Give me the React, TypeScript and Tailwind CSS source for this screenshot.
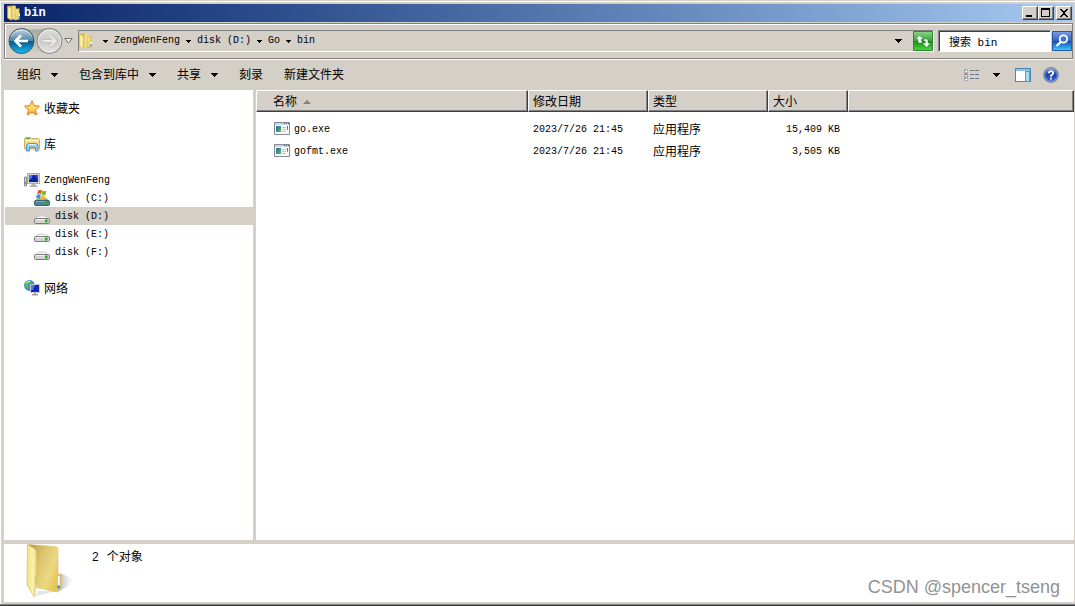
import React, { useState } from "react";

const crumbs = ["ZengWenFeng", "disk (D:)", "Go", "bin"];

const files = [
  { name: "go.exe", date: "2023/7/26 21:45", type: "应用程序", size: "15,409 KB" },
  { name: "gofmt.exe", date: "2023/7/26 21:45", type: "应用程序", size: "3,505 KB" },
];

const drives = ["disk (C:)", "disk (D:)", "disk (E:)", "disk (F:)"];

const MONO = "font-['Liberation_Mono','Noto_Sans_CJK_SC',monospace] text-[10px]";

function Arrow({ small = false }: { small?: boolean }) {
  return small ? (
    <svg width="5" height="3" viewBox="0 0 5 3" shapeRendering="crispEdges">
      <path d="M0 0h5v1h-1v1h-1v1h-1v-1h-1v-1h-1z" />
    </svg>
  ) : (
    <svg width="7" height="4" viewBox="0 0 7 4" shapeRendering="crispEdges">
      <path d="M0 0h7v1h-1v1h-1v1h-1v1h-1v-1h-1v-1h-1v-1h-1z" />
    </svg>
  );
}

function SmallFolder() {
  return (
    <svg width="14" height="16" viewBox="0 0 14 16">
      <defs>
        <linearGradient id="sfBack" x1="0" x2="1">
          <stop offset="0" stopColor="#c39c30" />
          <stop offset="1" stopColor="#f0d978" />
        </linearGradient>
        <linearGradient id="sfFront" x1="0" x2="1">
          <stop offset="0" stopColor="#f3dc7c" />
          <stop offset="0.6" stopColor="#fdf5b4" />
          <stop offset="1" stopColor="#ecd678" />
        </linearGradient>
        <linearGradient id="sfRight" x1="0" x2="1" y1="0" y2="1">
          <stop offset="0" stopColor="#fbeea0" />
          <stop offset="1" stopColor="#e3bd45" />
        </linearGradient>
      </defs>
      <path d="M1 .8L8.500.5v13.500L4 14.500z" fill="url(#sfBack)" />
      <path d="M5.500 1.800l3-.8v13.500h-3z" fill="#f4e084" />
      <path d="M.5 1l4 2v12.300L.5 13z" fill="url(#sfFront)" stroke="#d0ac48" strokeWidth=".5" />
      <path d="M8 4l4.200-.5v10.700L8 15.200z" fill="url(#sfRight)" stroke="#c9a23c" strokeWidth=".5" />
      <path d="M11.500 8.500h1.500v5h-1.500z" fill="#fff" />
      <path d="M11.500 11h1.500v2.500h-1.500z" fill="#3fa2ea" />
    </svg>
  );
}

function LargeFolder() {
  return (
    <svg width="50" height="54" viewBox="0 0 50 54">
      <defs>
        <linearGradient id="lfBack" x1="0" x2="1" y1="0" y2=".6">
          <stop offset="0" stopColor="#b99b45" />
          <stop offset="0.4" stopColor="#dcc36c" />
          <stop offset="0.75" stopColor="#ecd883" />
          <stop offset="1" stopColor="#e7c453" />
        </linearGradient>
        <linearGradient id="lfFront" x1="0" x2="1">
          <stop offset="0" stopColor="#f3df84" />
          <stop offset="0.6" stopColor="#fbf2ae" />
          <stop offset="1" stopColor="#e6cf77" />
        </linearGradient>
        <linearGradient id="lfShade" x1="0" x2="1">
          <stop offset="0" stopColor="#8c8c8c" stopOpacity=".7" />
          <stop offset="1" stopColor="#ccc" stopOpacity="0" />
        </linearGradient>
      </defs>
      <path d="M34 29l14 6.500-5 6-11 6z" fill="url(#lfShade)" />
      <path d="M10 52l20-5H12z" fill="#bbb" opacity=".4" />
      <path d="M3 .5L28 2.500q4 .500 4 2v25.500l2.500.500v15l-4 2.500-20-4.500z" fill="url(#lfBack)" stroke="#d2b558" strokeWidth=".5" />
      <path d="M1.500.5L9 5q2 1.500 2 4v23l-1.500 1.500-.500 19q-.300.500-1 0L1 41z" fill="url(#lfFront)" stroke="#cdb055" strokeWidth=".6" />
      <path d="M31.500 31.500h2.500v12.500l-2.500 1.500z" fill="#fff" stroke="#d9b54a" strokeWidth=".6" />
      <circle cx="32.700" cy="43" r="1.700" fill="#3f97e8" />
    </svg>
  );
}

function NavCircles() {
  return (
    <div className="relative flex h-7 w-[55px] items-center justify-between">
      <svg className="absolute inset-0" width="55" height="28" viewBox="0 0 55 28" aria-hidden="true">
        <defs>
          <linearGradient id="pill" x1="0" x2="0" y1="0" y2="1">
            <stop offset="0" stopColor="#aaa8a3" />
            <stop offset="1" stopColor="#cfccc5" />
          </linearGradient>
          <linearGradient id="backTop" x1="0" x2="0" y1="0" y2="1">
            <stop offset="0" stopColor="#c7d3dc" />
            <stop offset=".48" stopColor="#4f87ab" />
            <stop offset=".5" stopColor="#08578c" />
            <stop offset="1" stopColor="#19bdf2" />
          </linearGradient>
          <linearGradient id="fwd" x1="0" x2="0" y1="0" y2="1">
            <stop offset="0" stopColor="#dedddb" />
            <stop offset=".5" stopColor="#cbcac7" />
            <stop offset="1" stopColor="#e6e5e3" />
          </linearGradient>
        </defs>
        <path d="M13 1Q27 4 41 1v26Q27 24 13 27z" fill="url(#pill)" />
        <circle cx="13.500" cy="14" r="12.500" fill="url(#backTop)" stroke="#35566d" strokeWidth="1" />
        <path d="M3.500 9a11.500 11.500 0 0 1 20 0" fill="none" stroke="#fff" strokeOpacity=".55" />
        <path d="M20 14H8.500M13 8.500L7.500 14l5.500 5.500" fill="none" stroke="#fff" strokeWidth="2.600" />
        <circle cx="41.500" cy="14" r="12.300" fill="url(#fwd)" stroke="#8e8e8c" strokeWidth="1.200" />
        <circle cx="41.500" cy="14" r="11.200" fill="none" stroke="#f5f5f3" strokeWidth=".8" />
        <path d="M35 14h11.500M42 8.500l5.500 5.500-5.500 5.500" fill="none" stroke="#b3b3b0" strokeWidth="3.800" />
        <path d="M35 14h11.500M42 8.500l5.500 5.500-5.500 5.500" fill="none" stroke="#eae9e7" strokeWidth="2.400" />
      </svg>
      <button aria-label="后退" className="relative h-7 w-[27px] rounded-full" />
      <button aria-label="前进" className="relative h-7 w-[27px] rounded-full" />
    </div>
  );
}

function StarIcon() {
  return (
    <svg width="16" height="16" viewBox="0 0 16 16">
      <defs>
        <linearGradient id="star" x1="0" x2="0" y1="0" y2="1">
          <stop offset="0" stopColor="#ffe98a" />
          <stop offset=".55" stopColor="#ffd75e" />
          <stop offset="1" stopColor="#fb9a2c" />
        </linearGradient>
      </defs>
      <path d="M8 .8l2.200 4.800 5.200.600-3.900 3.500 1.100 5.300L8 12.300 3.400 15l1.100-5.300L.6 6.200l5.200-.600z" fill="url(#star)" stroke="#dc7d22" strokeWidth="1" strokeLinejoin="round" />
    </svg>
  );
}

function LibraryIcon() {
  return (
    <svg width="16" height="16" viewBox="0 0 16 16">
      <path d="M.5 2.500l1-1h5l1 1h7l1 1v9.500h-15z" fill="#f0dc92" stroke="#cdb05a" />
      <path d="M1.500 4.500h13" stroke="#fff5c4" />
      <path d="M2 2.500h4" stroke="#4f9e4a" />
      <path d="M2.500 15v-5Q2.500 7.500 5 7.500h6.500Q14 7.500 14 10v5h-2.500v-3.500h-6V15z" fill="#8fcdf2" stroke="#4b99c8" />
      <path d="M4 9.500q.500-1 2-1h4.500q1.500 0 2 1" fill="none" stroke="#e0f5ff" />
    </svg>
  );
}

function ComputerIcon() {
  return (
    <svg width="16" height="16" viewBox="0 0 16 16">
      <path d="M.5 5h2v9h-2z" fill="#d4d6d8" stroke="#8b8f92" />
      <path d="M1 10h1v2h-1z" fill="#35b32f" />
      <path d="M3.500 1.500h12v10h-12z" fill="#d4d4d4" stroke="#a9a9a9" />
      <path d="M5 3h9v7H5z" fill="#0b22a3" />
      <path d="M5 3h4l-2 4-2 1z" fill="#5272e8" />
      <path d="M10 3h4v5z" fill="#2445cc" />
      <path d="M7.500 12h4v1.500h2V15h-8v-1.500h2z" fill="#b4b4b4" />
    </svg>
  );
}

function DriveIcon({ system = false }: { system?: boolean }) {
  return (
    <svg className="shrink-0" width="16" height="18" viewBox="0 0 16 18">
      <path d="M4 9.500q4-1.500 8 0l3 2.500v1H1v-1z" fill={system ? "#9cb0b3" : "#f4f4f4"} stroke={system ? "#6e8588" : "#bdbdbd"} strokeWidth=".7" />
      <rect x=".5" y="11.500" width="15" height="5" rx="1.200" fill={system ? "#4f8791" : "#d2d2d2"} stroke={system ? "#3d646b" : "#7d7d7d"} />
      <path d="M2 12.500h9" stroke={system ? "#78aeb5" : "#f4f4f4"} />
      <path d="M11 12.500h2.500v3H11z" fill="#24b51d" />
      {system && (
        <g>
          <path d="M4.200 1.600Q6 0 8 1.400L7 5.200Q5 4 3 5.300z" fill="#e4552a" />
          <path d="M8.600 1.600q2 1.300 4 .200l-1 3.800q-2 .900-4-.200z" fill="#76b82a" />
          <path d="M2.800 5.900q2-1.200 4-.100L5.800 9.400q-2-1.200-4 .200z" fill="#3f8edd" />
          <path d="M7.400 6q2 1.200 4 .200l-1 3.600q-2 1-4-.100z" fill="#f9bd21" />
        </g>
      )}
    </svg>
  );
}

function NetworkIcon() {
  return (
    <svg width="16" height="16" viewBox="0 0 16 16">
      <circle cx="5.500" cy="5.500" r="5" fill="#2f8fe0" stroke="#1f67b0" strokeWidth=".6" />
      <path d="M2 2.500Q5 0 7.500 1.500L6 4 3.500 4.500 4.500 7 3 9 1 6z" fill="#5bc43d" />
      <path d="M8 3l2 1v3l-2-1z" fill="#4fb435" />
      <path d="M2 3q2-2 4-1.600" stroke="#d5f4ff" fill="none" />
      <path d="M6.500 4.500h9v8h-9z" fill="#0f2bb0" stroke="#c9cdd6" />
      <path d="M7 5h4l-2 5H7z" fill="#4a7be6" />
      <path d="M10 13h2v1h2v1.500H8V14h2z" fill="#9a9ea5" />
    </svg>
  );
}

function ExeIcon() {
  return (
    <svg className="mb-[2px] shrink-0" width="16" height="13" viewBox="0 0 16 13">
      <defs>
        <linearGradient id="exe" x1="0" x2="1" y1="0" y2="1">
          <stop offset="0" stopColor="#2f62b4" />
          <stop offset="1" stopColor="#4dbf5c" />
        </linearGradient>
      </defs>
      <path d="M.5.5h15v12H.5z" fill="#fafafa" stroke="#848b93" />
      <path d="M1 1h14v2H1z" fill="#cfd6e2" />
      <path d="M10 1.500h1M12 1.500h1M14 1.500h1" stroke="#47566c" />
      <path d="M2 4h5v6H2z" fill="url(#exe)" />
      <path d="M8 5.500h4M8 7.500h4M8 9.500h4" stroke="#c1c4c8" />
      <path d="M13 4h1v3h-1z" fill="#3274b8" />
      <path d="M13 7h1v1h-1z" fill="#55b86a" />
    </svg>
  );
}

function CaptionButton({ label, children }: { label: string; children: React.ReactNode }) {
  return (
    <button
      aria-label={label}
      className="h-[14px] w-4 border border-t-white border-l-white border-r-[#404040] border-b-[#404040] bg-[#d4d0c8] shadow-[inset_-1px_-1px_0_#808080]"
    >
      <svg width="14" height="12" viewBox="0 0 14 12" shapeRendering="crispEdges">
        {children}
      </svg>
    </button>
  );
}

function TitleBar() {
  return (
    <header className="flex h-[18px] items-center bg-linear-to-r from-[#0a246a] to-[#a6caf0] pr-px pl-[3px]">
      <SmallFolder />
      <h1 className="ml-[3px] flex-1 font-['Liberation_Mono',monospace] text-[12px] leading-4 font-bold text-white">bin</h1>
      <CaptionButton label="最小化">
        <path d="M3 8h6v2H3z" />
      </CaptionButton>
      <CaptionButton label="最大化">
        <path d="M2 1h9v9H2zM3 3v6h7V3z" fillRule="evenodd" />
      </CaptionButton>
      <span className="w-[2px]" />
      <CaptionButton label="关闭">
        <path d="M3 2h2v1h1v1h2v-1h1v-1h2v1h-1v1h-1v1h-1v2h1v1h1v1h1v1h-2v-1h-1v-1h-2v1h-1v1h-2v-1h1v-1h1v-1h1v-2h-1v-1h-1v-1h-1z" />
      </CaptionButton>
    </header>
  );
}

function AddressRow() {
  const [query, setQuery] = useState("搜索 bin");

  return (
    <nav className="mt-px flex h-9 items-center border border-[#808080] pl-[3px] shadow-[inset_1px_1px_0_#fff,0_1px_0_#fff]">
      <NavCircles />
      <button aria-label="最近的页面" className="ml-px">
        <svg width="9" height="6" viewBox="0 0 9 6">
          <path d="M.8.5h7.400L4.500 5z" fill="#f3f3f3" stroke="#77736c" />
        </svg>
      </button>
      <div className={`ml-[5px] flex h-[22px] flex-1 items-center border border-t-[#808080] border-l-[#808080] border-r-white border-b-white ${MONO}`}>
        <SmallFolder />
        <span className="w-1" />
        {crumbs.map((crumb) => (
          <React.Fragment key={crumb}>
            <span className="flex w-[17px] justify-center">
              <Arrow small />
            </span>
            <a href="#" className="leading-4">{crumb}</a>
          </React.Fragment>
        ))}
        <button aria-label="以前的位置" className="mr-[11px] ml-auto">
          <Arrow />
        </button>
        <button aria-label="刷新">
          <svg width="20" height="20" viewBox="0 0 20 20">
            <defs>
              <linearGradient id="refresh" x1="0" x2="0" y1="0" y2="1">
                <stop offset="0" stopColor="#8ad58a" />
                <stop offset=".48" stopColor="#3aa53c" />
                <stop offset=".5" stopColor="#168a1c" />
                <stop offset="1" stopColor="#4bd934" />
              </linearGradient>
            </defs>
            <path d="M.5.5h19v19H.5z" fill="url(#refresh)" stroke="#2c8a34" />
            <path d="M6.500 4L2.500 8.500h2.500V11q0 1 1 1h3V9.500H8v-1h2.500z" fill="#fff" stroke="#187a20" strokeWidth=".5" />
            <path d="M13.500 16.500l4-4.500H15V9.500q0-1.500-1.500-1.500H11v2.500h1.500V12H9.500z" fill="#fff" stroke="#187a20" strokeWidth=".5" />
          </svg>
        </button>
      </div>
      <form className="ml-1 flex items-center gap-px" onSubmit={(e) => e.preventDefault()}>
        <input
          aria-label="搜索"
          value={query}
          onChange={(e) => setQuery(e.target.value)}
          className="h-[22px] w-[113px] border border-t-[#808080] border-l-[#808080] border-r-white border-b-white bg-white pl-[10px] font-['Liberation_Mono','Noto_Sans_CJK_SC',monospace] text-[11px] shadow-[inset_1px_1px_0_#404040] outline-none"
        />
        <button aria-label="开始搜索">
          <svg width="20" height="20" viewBox="0 0 20 20">
            <defs>
              <linearGradient id="search" x1="0" x2="0" y1="0" y2="1">
                <stop offset="0" stopColor="#7f9cdf" />
                <stop offset=".48" stopColor="#3263c8" />
                <stop offset=".5" stopColor="#1549b5" />
                <stop offset="1" stopColor="#39d0fb" />
              </linearGradient>
            </defs>
            <path d="M.5.5h19v19H.5z" fill="url(#search)" stroke="#2e57a6" />
            <circle cx="11.500" cy="8" r="3.700" fill="#3f74d6" stroke="#fff" strokeWidth="1.800" />
            <path d="M8.800 10.800L4.500 15" stroke="#fff" strokeWidth="2.400" />
          </svg>
        </button>
      </form>
    </nav>
  );
}

function MenuButton({ label, menu = false }: { label: string; menu?: boolean }) {
  return (
    <button className="flex items-center gap-[10px]">
      {label}
      {menu && <Arrow />}
    </button>
  );
}

function Toolbar() {
  return (
    <div className="flex h-[31px] items-center gap-[21px] pr-4 pl-[13px]">
      <MenuButton label="组织" menu />
      <MenuButton label="包含到库中" menu />
      <MenuButton label="共享" menu />
      <MenuButton label="刻录" />
      <MenuButton label="新建文件夹" />
      <div className="ml-auto flex items-center">
        <button aria-label="更改视图" className="flex items-center gap-[14px]">
          <svg width="15" height="12" viewBox="0 0 15 12" shapeRendering="crispEdges">
            <path d="M0 0h4v12H0z" fill="#a3afbf" />
            <path d="M1 1h2v2H1zM1 5h2v2H1zM1 9h2v2H1z" fill="#fff" />
            <path d="M1 1h1v1H1zM1 9h1v1H1z" fill="#4c7fa8" />
            <path d="M1 5h2v1H1z" fill="#c8452c" />
            <path d="M6 1.500h4M11 1.500h4M6 5.500h4M11 5.500h4M6 9.500h4M11 9.500h4" stroke="#62788f" />
          </svg>
          <Arrow />
        </button>
        <button aria-label="显示预览窗格" className="ml-[15px]">
          <svg width="16" height="14" viewBox="0 0 16 14" shapeRendering="crispEdges">
            <path d="M.5.5h15v13H.5z" fill="#fff" stroke="#4b87b4" />
            <path d="M1 1h14v2H1z" fill="#8fc0e0" />
            <path d="M10.500 3h4v10h-4z" fill="#a9dbef" stroke="#5d96bd" />
          </svg>
        </button>
        <button aria-label="获取帮助" className="ml-3">
          <svg width="16" height="16" viewBox="0 0 16 16">
            <defs>
              <linearGradient id="help" x1="0" x2="0" y1="0" y2="1">
                <stop offset="0" stopColor="#6d8fe0" />
                <stop offset=".5" stopColor="#1e3fae" />
                <stop offset="1" stopColor="#3b6ce0" />
              </linearGradient>
            </defs>
            <circle cx="8" cy="8" r="7.300" fill="url(#help)" stroke="#7c8597" strokeWidth="1.200" />
            <circle cx="8" cy="8" r="6.300" fill="none" stroke="#b9cbf5" strokeWidth=".6" />
            <path d="M5.800 6.300Q5.900 4.200 8 4.200t2.200 1.900Q10.200 7.300 8 8.600V9.800" fill="none" stroke="#fff" strokeWidth="1.700" />
            <path d="M7.100 10.800h1.800v1.700H7.100z" fill="#fff" />
          </svg>
        </button>
      </div>
    </div>
  );
}

function TreeItem({ icon, label }: { icon: React.ReactNode; label: string }) {
  return (
    <a href="#" className="flex h-[18px] items-center gap-1 pl-[19px]">
      {icon}
      <span className="pt-px">{label}</span>
    </a>
  );
}

function Sidebar() {
  const [selected, setSelected] = useState("disk (D:)");

  return (
    <aside className="w-[249px] shrink-0 space-y-[18px] bg-white pt-[9px] pl-px">
      <TreeItem icon={<StarIcon />} label="收藏夹" />
      <TreeItem icon={<LibraryIcon />} label="库" />
      <div className={MONO}>
        <TreeItem icon={<ComputerIcon />} label="ZengWenFeng" />
        {drives.map((drive) => (
          <button
            key={drive}
            onClick={() => setSelected(drive)}
            className={
              drive === selected
                ? "flex h-[18px] w-full items-center gap-[5px] bg-[#d4d0c8] pl-[29px]"
                : "flex h-[18px] w-full items-center gap-[5px] pl-[29px]"
            }
          >
            <DriveIcon system={drive === "disk (C:)"} />
            <span className="pt-px">{drive}</span>
          </button>
        ))}
      </div>
      <TreeItem icon={<NetworkIcon />} label="网络" />
    </aside>
  );
}

const TH =
  "h-[22px] border border-t-white border-l-white border-r-[#404040] border-b-[#404040] bg-[#d4d0c8] p-0 pt-px pl-1 text-left font-normal shadow-[inset_-1px_-1px_0_#808080]";

function FileList() {
  return (
    <main className="min-w-0 flex-1 bg-white">
      <table className="w-full table-fixed border-separate border-spacing-0">
        <colgroup>
          <col className="w-[272px]" />
          <col className="w-[120px]" />
          <col className="w-[120px]" />
          <col className="w-[80px]" />
          <col />
        </colgroup>
        <thead>
          <tr>
            <th className={TH}>
              <span className="flex items-center gap-[6px] pl-3">
                名称
                <svg width="8" height="4" viewBox="0 0 8 4">
                  <path d="M0 4l4-4 4 4z" fill="#808080" />
                </svg>
              </span>
            </th>
            <th className={TH}>修改日期</th>
            <th className={TH}>类型</th>
            <th className={TH}>大小</th>
            <td className={TH} />
          </tr>
        </thead>
        <tbody className="before:block before:h-[6px] before:content-['']">
          {files.map((file) => (
            <tr key={file.name} className="h-[22px]">
              <td className="p-0 pl-[18px]">
                <span className={`flex items-center gap-1 ${MONO}`}>
                  <ExeIcon />
                  <span className="pt-[2px]">{file.name}</span>
                </span>
              </td>
              <td className={`p-0 pt-[2px] pl-[5px] ${MONO}`}>{file.date}</td>
              <td className="p-0 pt-[2px] pl-[5px]">{file.type}</td>
              <td className={`p-0 pt-[2px] pr-2 text-right ${MONO}`}>{file.size}</td>
              <td />
            </tr>
          ))}
        </tbody>
      </table>
    </main>
  );
}

function DetailsPane() {
  return (
    <footer className="mt-1 flex h-[58px] bg-white pr-[14px] pl-[22px]">
      <LargeFolder />
      <p className="mt-[5px] ml-4 flex h-4 items-center gap-2">
        <span>2</span>
        <span>个对象</span>
      </p>
      <span className="mb-[3px] ml-auto self-end font-['Liberation_Sans',sans-serif] text-[18px] leading-6 text-[#929292]">
        CSDN @spencer_tseng
      </span>
    </footer>
  );
}

export default function App() {
  return (
    <div className="flex min-h-screen flex-col border-b border-[#404040] bg-[#d4d0c8] font-['Liberation_Sans','Noto_Sans_CJK_SC',sans-serif] text-[12px] leading-4 text-black">
      <div className="flex flex-1 flex-col border-b border-[#808080] pt-px">
        <div className="flex flex-1 flex-col border-t border-l border-white pt-[2px] pb-[2px] pl-[3px]">
          <div className="pr-[2px]">
            <TitleBar />
            <AddressRow />
          </div>
          <Toolbar />
          <div className="flex flex-1 gap-[3px] pr-px">
            <Sidebar />
            <FileList />
          </div>
          <div className="pr-px">
            <DetailsPane />
          </div>
        </div>
      </div>
    </div>
  );
}
